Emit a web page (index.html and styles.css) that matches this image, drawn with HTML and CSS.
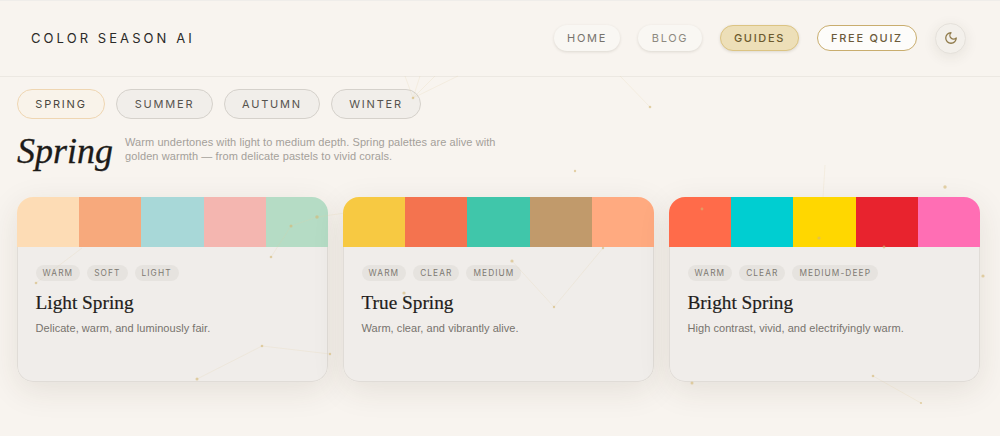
FILE: index.html
```html
<!DOCTYPE html>
<html lang="en">
<head>
    <meta charset="UTF-8">
    <meta name="viewport" content="width=device-width, initial-scale=1.0">
    <title>Color Season AI</title>
    <link rel="stylesheet" href="styles.css">
</head>
<body>
    <header class="topbar">
        <div class="logo">COLOR SEASON AI</div>
        <nav class="nav">
            <a class="nav-pill nav-home">HOME</a>
            <a class="nav-pill nav-blog">BLOG</a>
            <a class="nav-pill nav-active">GUIDES</a>
            <a class="nav-pill nav-quiz">FREE QUIZ</a>
            <button class="theme-btn" aria-label="Toggle theme">
                <svg width="14" height="14" viewBox="0 0 24 24" fill="none" stroke="#8f7a4a" stroke-width="2.2" stroke-linecap="round" stroke-linejoin="round"><path d="M12 3a6 6 0 0 0 9 9 9 9 0 1 1-9-9Z"/></svg>
            </button>
        </nav>
    </header>

    <main class="content">
        <div class="tabs">
            <a class="tab tab-active">SPRING</a>
            <a class="tab tab-summer">SUMMER</a>
            <a class="tab tab-autumn">AUTUMN</a>
            <a class="tab tab-winter">WINTER</a>
        </div>

        <div class="season-head">
            <h1>Spring</h1>
            <p>Warm undertones with light to medium depth. Spring palettes are alive with golden warmth — from delicate pastels to vivid corals.</p>
        </div>

        <div class="cards">
            <article class="card">
                <div class="palette">
                    <span class="c-peach"></span><span class="c-apricot"></span><span class="c-aqua"></span><span class="c-blush"></span><span class="c-mint"></span>
                </div>
                <div class="card-body">
                    <div class="tags"><span>WARM</span><span>SOFT</span><span>LIGHT</span></div>
                    <h2>Light Spring</h2>
                    <p>Delicate, warm, and luminously fair.</p>
                </div>
            </article>
            <article class="card">
                <div class="palette">
                    <span class="c-sun"></span><span class="c-coral"></span><span class="c-teal"></span><span class="c-camel"></span><span class="c-melon"></span>
                </div>
                <div class="card-body">
                    <div class="tags"><span>WARM</span><span>CLEAR</span><span>MEDIUM</span></div>
                    <h2>True Spring</h2>
                    <p>Warm, clear, and vibrantly alive.</p>
                </div>
            </article>
            <article class="card">
                <div class="palette">
                    <span class="c-tomato"></span><span class="c-cyan"></span><span class="c-gold"></span><span class="c-red"></span><span class="c-pink"></span>
                </div>
                <div class="card-body">
                    <div class="tags"><span>WARM</span><span>CLEAR</span><span>MEDIUM-DEEP</span></div>
                    <h2>Bright Spring</h2>
                    <p>High contrast, vivid, and electrifyingly warm.</p>
                </div>
            </article>
        </div>
    </main>

    <!-- constellation layer, drawn over everything -->
    <svg class="stars" width="1000" height="436" viewBox="0 0 1000 436">
        <g class="star-lines">
            <path d="M413 98L458 76M413 98L420 76M413 98L405 76M413 98L435 76"/>
            <path d="M620 76L650 107"/>
            <path d="M271 257L291 226L317 217L345 213"/>
            <path d="M197 379L262 346L330 354"/>
            <path d="M36 283L82 248"/>
            <path d="M512 261L554 307L603 248"/>
            <path d="M873 376L921 403"/>
            <path d="M825 165L823 197"/>
        </g>
        <g class="star-dots">
            <circle cx="413" cy="98" r="1.3"/><circle cx="650" cy="107" r="1.3"/><circle cx="575" cy="171" r="1.2"/>
            <circle cx="291" cy="226" r="1.5"/><circle cx="317" cy="217" r="1.7"/><circle cx="271" cy="257" r="1.3"/>
            <circle cx="36" cy="283" r="1.3"/><circle cx="262" cy="346" r="1.3"/><circle cx="197" cy="379" r="1.5"/><circle cx="330" cy="354" r="1.2"/>
            <circle cx="512" cy="261" r="1.6"/><circle cx="404" cy="293" r="1.6"/><circle cx="554" cy="307" r="1.2"/><circle cx="603" cy="248" r="1.2"/>
            <circle cx="702" cy="209" r="1.4"/><circle cx="819" cy="238" r="1.6"/><circle cx="884" cy="247" r="1.4"/><circle cx="983" cy="276" r="1.6"/>
            <circle cx="692" cy="383" r="1.5"/><circle cx="873" cy="376" r="1.3"/><circle cx="921" cy="403" r="1.1"/><circle cx="945" cy="187" r="1.7"/>
        </g>
    </svg>
</body>
</html>
```

FILE: styles.css
```css
/* General styling */
body, html {
    margin: 0;
    padding: 0;
    width: 100%;
    height: 100%;
    overflow: hidden;
    background-color: #f8f4ef;
    font-family: "Liberation Sans", Arial, sans-serif;
}

/* Top bar */
.topbar {
    height: 74px;
    border-top: 1px solid #efedea;
    border-bottom: 1px solid #ece8e2;
    display: flex;
    align-items: center;
    justify-content: space-between;
    padding: 0 34px 1px 31px;
}

.logo {
    font-family: Inter, sans-serif;
    font-size: 13px;
    letter-spacing: 3.07px;
    color: #2b2a28;
}

.nav {
    display: flex;
    align-items: center;
    gap: 18px;
}

.nav-pill {
    display: flex;
    align-items: center;
    justify-content: center;
    box-sizing: border-box;
    height: 26px;
    border-radius: 13px;
    font-family: Inter, sans-serif;
    font-size: 11px;
    letter-spacing: 1.7px;
    color: #77736c;
    background-color: #f9f7f3;
    box-shadow: 0 1px 3px rgba(60, 50, 30, 0.14);
}

.nav-home { width: 66px; }
.nav-blog { width: 64px; color: #8d8981; }

.nav-active {
    width: 79px;
    font-weight: 500;
    color: #6b5a2e;
    background-color: #eddfb8;
    border: 1px solid #dcc483;
}

.nav-quiz {
    width: 100px;
    font-weight: 500;
    color: #6b5a3a;
    background-color: #fdfcfa;
    border: 1px solid #c9ad6e;
    box-shadow: none;
}

.theme-btn {
    display: flex;
    align-items: center;
    justify-content: center;
    box-sizing: border-box;
    width: 31px;
    height: 31px;
    padding: 0;
    border-radius: 50%;
    border: 1px solid #e5e1db;
    background-color: #f3f0eb;
    box-shadow: 0 3px 14px rgba(60, 50, 30, 0.09);
}

/* Page content */
.content {
    padding: 12px 20px 0 17px;
}

.tabs {
    display: flex;
    gap: 11px;
}

.tab {
    display: flex;
    align-items: center;
    justify-content: center;
    box-sizing: border-box;
    height: 30px;
    border-radius: 15px;
    font-family: Inter, sans-serif;
    font-size: 11px;
    letter-spacing: 1.8px;
    color: #56534e;
    background-color: #f1eeea;
    border: 1px solid #d5d1cb;
}

.tab-active {
    width: 88px;
    color: #4a4640;
    background-color: #f9f3ea;
    border-color: #efd6b2;
}

.tab-summer { width: 97px; }
.tab-autumn { width: 96px; }
.tab-winter { width: 90px; }

.season-head {
    display: flex;
    align-items: flex-start;
    gap: 12px;
    margin-top: 10px;
}

.season-head h1 {
    margin: 0;
    font-family: "Liberation Serif", Georgia, serif;
    font-style: italic;
    font-weight: 400;
    font-size: 36px;
    line-height: 44px;
    color: #1d1b19;
    -webkit-text-stroke: 0.3px #1d1b19;
}

.season-head p {
    margin: 6px 0 0;
    width: 385px;
    font-size: 11px;
    line-height: 14px;
    color: #a4a09a;
    letter-spacing: 0.08px;
}

/* Card styling */
.cards {
    display: grid;
    grid-template-columns: repeat(3, 311px);
    gap: 15px;
    margin-top: 24px;
}

.card {
    border-radius: 16px;
    overflow: hidden;
    box-shadow: 0 8px 32px rgba(60, 50, 30, 0.1);
}

.palette {
    display: flex;
    height: 50px;
}

.palette span {
    flex: 1;
}

.c-peach { background-color: #fddcb5; }
.c-apricot { background-color: #f7a97c; }
.c-aqua { background-color: #a8d8d8; }
.c-blush { background-color: #f4b6b0; }
.c-mint { background-color: #b5dcc5; }
.c-sun { background-color: #f7c942; }
.c-coral { background-color: #f4734f; }
.c-teal { background-color: #40c6aa; }
.c-camel { background-color: #c19a6b; }
.c-melon { background-color: #ffaa80; }
.c-tomato { background-color: #ff6b4a; }
.c-cyan { background-color: #00ced1; }
.c-gold { background-color: #ffd700; }
.c-red { background-color: #e8232e; }
.c-pink { background-color: #ff6eb4; }

.card-body {
    height: 135px;
    box-sizing: border-box;
    padding: 18px 17.5px 0;
    background-color: #f0edea;
    border: 1px solid #e0dcd7;
    border-top: none;
    border-radius: 0 0 16px 16px;
}

.tags {
    display: flex;
    gap: 7px;
}

.tags span {
    display: flex;
    align-items: center;
    height: 15.5px;
    padding: 0 7px;
    border-radius: 8px;
    font-family: Inter, sans-serif;
    font-size: 8.3px;
    letter-spacing: 1.1px;
    color: #7d7972;
    background-color: #e6e3df;
}

.card-body h2 {
    margin: 10.5px 0 0;
    font-family: "Liberation Serif", Georgia, serif;
    font-weight: 400;
    font-size: 19.3px;
    line-height: 23px;
    color: #1f1d1b;
    -webkit-text-stroke: 0.2px #1f1d1b;
}

.card-body p {
    margin: 7px 0 0;
    font-size: 11px;
    line-height: 14px;
    letter-spacing: 0.05px;
    color: #77736d;
}

/* Constellation overlay */
.stars {
    position: absolute;
    top: 0;
    left: 0;
    pointer-events: none;
}

.star-lines path {
    fill: none;
    stroke: #e3cfa4;
    stroke-width: 0.7;
    opacity: 0.3;
}

.star-dots circle {
    fill: #d3b873;
    opacity: 0.6;
}
```
